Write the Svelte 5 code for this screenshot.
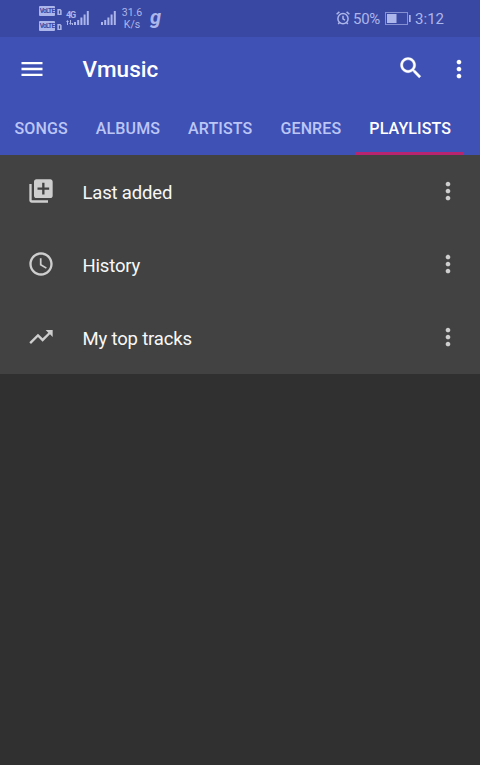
<script lang="ts">
	type Playlist = {
		name: string;
		icon: string;
	};

	const tabs = ['Songs', 'Albums', 'Artists', 'Genres', 'Playlists'];

	const playlists: Playlist[] = [
		{
			name: 'Last added',
			icon: 'M4 6H2v14c0 1.1.9 2 2 2h14v-2H4V6zm16-4H8c-1.1 0-2 .9-2 2v12c0 1.1.9 2 2 2h12c1.1 0 2-.9 2-2V4c0-1.1-.9-2-2-2zm-1 9h-4v4h-2v-4H9V9h4V5h2v4h4v2z'
		},
		{
			name: 'History',
			icon: 'M11.99 2C6.47 2 2 6.48 2 12s4.47 10 9.99 10C17.52 22 22 17.52 22 12S17.52 2 11.99 2zM12 20c-4.42 0-8-3.58-8-8s3.58-8 8-8 8 3.58 8 8-3.58 8-8 8zm.5-13H11v6l5.25 3.15.75-1.23-4.5-2.67V7z'
		},
		{
			name: 'My top tracks',
			icon: 'M16 6l2.29 2.29-4.88 4.88-4-4L2 16.59 3.41 18l6-6 4 4 6.3-6.29L22 12V6h-6z'
		}
	];

	let active = $state('Playlists');
</script>

{#snippet icon(path: string)}
	<svg class="icon" viewBox="0 0 24 24" aria-hidden="true"><path d={path} /></svg>
{/snippet}

{#snippet more()}
	{@render icon(
		'M12 8c1.1 0 2-.9 2-2s-.9-2-2-2-2 .9-2 2 .9 2 2 2zm0 2c-1.1 0-2 .9-2 2s.9 2 2 2 2-.9 2-2-.9-2-2-2zm0 6c-1.1 0-2 .9-2 2s.9 2 2 2 2-.9 2-2-.9-2-2-2z'
	)}
{/snippet}

{#snippet bars()}
	<svg class="bars" viewBox="0 0 15 14" aria-hidden="true">
		<path d="M0 11h2v3H0zM3.2 9h2v5h-2zM6.4 6.5h2V14h-2zM9.6 3.5h2V14h-2zM12.8 0h2v14h-2z" />
	</svg>
{/snippet}

<div class="screen">
	<div class="status">
		<div class="sims">
			{#each [1, 2] as sim (sim)}
				<div class="sim">
					<span class="volte">VoLTE</span>
					<svg viewBox="0 0 5 7" aria-hidden="true">
						<path fill-rule="evenodd" d="M0 0h3.5L5 1.5V7H0zM1.8 1.8h1.4v3.6H1.8z" />
					</svg>
				</div>
			{/each}
		</div>
		<div class="network">
			<div class="type">
				<span>4G</span>
				<svg viewBox="0 0 7 5" aria-hidden="true">
					<path d="M1.5 0L3 2H2v3H1V2H0zM4 0h1v3h1L4.5 5 3 3h1zM6 3h1v2H6z" />
				</svg>
			</div>
			{@render bars()}
		</div>
		<div class="second">{@render bars()}</div>
		<div class="speed"><span>31.6</span><span>K/s</span></div>
		<span class="app">g</span>
		<div class="right">
			<svg class="alarm" viewBox="0 0 14 14" aria-hidden="true">
				<circle cx="7" cy="7.7" r="5.1" />
				<path d="M7 4.8v3l2 1.3M.6 3.3L3.4.9M13.4 3.3L10.6.9M3.5 11.5l-1.3 1.5M10.5 11.5l1.3 1.5" />
			</svg>
			<span class="percent">50%</span>
			<svg class="battery" viewBox="0 0 26 13" aria-hidden="true">
				<rect class="case" x=".5" y=".5" width="22" height="12" />
				<rect x="2" y="2" width="9.5" height="9" />
				<rect x="24" y="3" width="1.7" height="7" />
			</svg>
			<span class="time">3:12</span>
		</div>
	</div>

	<header>
		<div class="toolbar">
			<button class="menu" aria-label="Menu">
				{@render icon('M3 18h18v-2H3v2zm0-5h18v-2H3v2zm0-7v2h18V6H3z')}
			</button>
			<h1>Vmusic</h1>
			<button class="search" aria-label="Search">
				{@render icon(
					'M15.5 14h-.79l-.28-.27C15.41 12.59 16 11.11 16 9.5 16 5.91 13.09 3 9.5 3S3 5.91 3 9.5 5.91 16 9.5 16c1.61 0 3.09-.59 4.23-1.57l.27.28v.79l5 4.99L20.49 19l-4.99-5zm-6 0C7.01 14 5 11.99 5 9.5S7.01 5 9.5 5 14 7.01 14 9.5 11.99 14 9.5 14z'
				)}
			</button>
			<button aria-label="More options">{@render more()}</button>
		</div>
		<nav>
			{#each tabs as tab (tab)}
				<button class="tab" class:active={active === tab} onclick={() => (active = tab)}>
					{tab}
				</button>
			{/each}
		</nav>
	</header>

	<ul>
		{#each playlists as playlist (playlist.name)}
			<li>
				{@render icon(playlist.icon)}
				<span class="name">{playlist.name}</span>
				<button aria-label="Playlist options">{@render more()}</button>
			</li>
		{/each}
	</ul>
</div>

<style>
	:global(body) {
		background: #303030;
	}

	.screen {
		width: 480px;
		height: 765px;
		overflow: hidden;
		background: #303030;
		color: #fff;
		font-family: Roboto, sans-serif;
	}

	button {
		display: flex;
		padding: 0;
		border: 0;
		background: none;
		color: inherit;
		font: inherit;
		cursor: pointer;
	}

	svg {
		display: block;
		flex: none;
		fill: currentColor;
	}

	.icon {
		width: 28px;
		height: 28px;
	}

	.status {
		display: flex;
		align-items: center;
		box-sizing: border-box;
		height: 37px;
		padding: 0 36px 0 39px;
		background: #3948a2;
		color: #adb6ea;
	}

	.sims {
		display: flex;
		flex-direction: column;
		gap: 5px;
		width: 27px;
	}

	.sim {
		display: flex;
		align-items: center;
		gap: 2px;
	}

	.sim svg {
		width: 5px;
		height: 6px;
		margin-top: 2px;
	}

	.volte {
		width: 16px;
		height: 10px;
		border-radius: 1px;
		background: #adb6ea;
		color: #3948a2;
		font-size: 6.5px;
		font-weight: 700;
		line-height: 10px;
		letter-spacing: -0.7px;
		text-align: center;
	}

	.network {
		display: flex;
		align-items: flex-end;
		width: 35px;
		margin-top: -2px;
	}

	.type {
		width: 8px;
		font-size: 9px;
		font-weight: 700;
		line-height: 8px;
		letter-spacing: -1.2px;
	}

	.type span {
		display: block;
		margin-bottom: 1px;
	}

	.type svg {
		width: 7px;
		height: 5px;
	}

	.bars {
		width: 15px;
		height: 14px;
	}

	.second {
		width: 21px;
		margin-top: -2px;
	}

	.speed {
		display: flex;
		flex-direction: column;
		align-items: center;
		width: 20px;
		font-size: 10.5px;
		line-height: 12px;
	}

	.app {
		margin: -4px 0 0 8px;
		font-family: Roboto, sans-serif;
		font-size: 20px;
		font-style: italic;
		font-weight: 700;
		line-height: 22px;
	}

	.right {
		display: flex;
		align-items: center;
		margin-left: auto;
	}

	.alarm {
		width: 14px;
		height: 14px;
		margin: -1px 3px 0 0;
		fill: none;
		stroke: currentColor;
		stroke-width: 1.5;
	}

	.percent,
	.time {
		font-size: 15px;
		line-height: 18px;
	}

	.percent {
		width: 32px;
		letter-spacing: -0.3px;
	}

	.battery {
		width: 26px;
		height: 13px;
		margin-right: 4px;
	}

	.case {
		fill: none;
		stroke: #8490d2;
	}

	header {
		height: 118px;
		background: #3f51b5;
	}

	.toolbar {
		display: flex;
		align-items: center;
		height: 63px;
		padding: 0 7px 0 18px;
	}

	.toolbar .search {
		margin: -1px 20px 0 0;
	}

	.search .icon {
		stroke: currentColor;
		stroke-width: 0.3;
	}

	h1 {
		flex: 1;
		margin: 0 0 0 36.5px;
		font-size: 22.5px;
		font-weight: 500;
		line-height: 28px;
	}

	nav {
		display: flex;
		height: 55px;
	}

	.tab {
		box-sizing: border-box;
		align-items: center;
		padding: 4px 14px 0;
		border-bottom: 3px solid transparent;
		color: #bcc6f6;
		font-size: 16px;
		font-weight: 500;
		letter-spacing: 0.13px;
		text-transform: uppercase;
	}

	.tab:first-child {
		padding-left: 14.5px;
	}

	.tab.active {
		padding-right: 13px;
		border-color: #b8246f;
		color: #fff;
	}

	ul {
		margin: 0;
		padding: 0;
		background: #424242;
		list-style: none;
	}

	li {
		display: flex;
		align-items: center;
		box-sizing: border-box;
		height: 73px;
		padding: 0 18px 1px 27px;
		color: #cecece;
	}

	.name {
		flex: 1;
		margin: 3px 0 0 27.5px;
		color: #f8f8f8;
		font-size: 18.5px;
		letter-spacing: -0.17px;
	}
</style>
